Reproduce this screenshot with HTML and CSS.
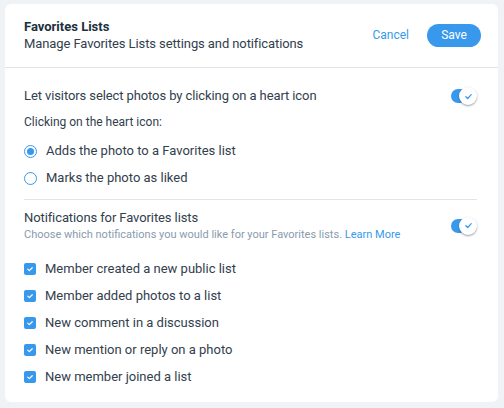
FILE: index.html
```html
<!DOCTYPE html>
<html lang="en">
<head>
    <meta charset="UTF-8">
    <meta name="viewport" content="width=device-width, initial-scale=1.0">
    <title>Favorites Lists</title>
    <link rel="stylesheet" href="styles.css">
</head>
<body>
    <div class="card">
        <div class="header">
            <div>
                <h1>Favorites Lists</h1>
                <p class="subtitle">Manage Favorites Lists settings and notifications</p>
            </div>
            <div class="actions">
                <button class="link-btn">Cancel</button>
                <button class="save-btn">Save</button>
            </div>
        </div>

        <div class="content">
            <div class="row first">
                <span class="row-title">Let visitors select photos by clicking on a heart icon</span>
                <span class="toggle"><span class="knob"><svg viewBox="0 0 10 10" width="9" height="9"><path d="M2 5.2 L4.2 7.2 L8 3" fill="none" stroke="#3899ec" stroke-width="1.4" stroke-linecap="round" stroke-linejoin="round"/></svg></span></span>
            </div>
            <p class="label">Clicking on the heart icon:</p>
            <div class="options">
                <label class="option"><span class="radio checked"></span>Adds the photo to a Favorites list</label>
                <label class="option"><span class="radio"></span>Marks the photo as liked</label>
            </div>

            <hr class="divider">

            <div class="row">
                <div>
                    <div class="row-title">Notifications for Favorites lists</div>
                    <div class="hint">Choose which notifications you would like for your Favorites lists. <a href="#">Learn More</a></div>
                </div>
                <span class="toggle"><span class="knob"><svg viewBox="0 0 10 10" width="9" height="9"><path d="M2 5.2 L4.2 7.2 L8 3" fill="none" stroke="#3899ec" stroke-width="1.4" stroke-linecap="round" stroke-linejoin="round"/></svg></span></span>
            </div>

            <div class="checks">
                <label class="option"><span class="checkbox"><svg viewBox="0 0 10 10" width="8" height="8"><path d="M2.2 5.2 L4.2 7 L7.8 3.4" fill="none" stroke="#fff" stroke-width="1.5" stroke-linecap="round" stroke-linejoin="round"/></svg></span>Member created a new public list</label>
                <label class="option"><span class="checkbox"><svg viewBox="0 0 10 10" width="8" height="8"><path d="M2.2 5.2 L4.2 7 L7.8 3.4" fill="none" stroke="#fff" stroke-width="1.5" stroke-linecap="round" stroke-linejoin="round"/></svg></span>Member added photos to a list</label>
                <label class="option"><span class="checkbox"><svg viewBox="0 0 10 10" width="8" height="8"><path d="M2.2 5.2 L4.2 7 L7.8 3.4" fill="none" stroke="#fff" stroke-width="1.5" stroke-linecap="round" stroke-linejoin="round"/></svg></span>New comment in a discussion</label>
                <label class="option"><span class="checkbox"><svg viewBox="0 0 10 10" width="8" height="8"><path d="M2.2 5.2 L4.2 7 L7.8 3.4" fill="none" stroke="#fff" stroke-width="1.5" stroke-linecap="round" stroke-linejoin="round"/></svg></span>New mention or reply on a photo</label>
                <label class="option"><span class="checkbox"><svg viewBox="0 0 10 10" width="8" height="8"><path d="M2.2 5.2 L4.2 7 L7.8 3.4" fill="none" stroke="#fff" stroke-width="1.5" stroke-linecap="round" stroke-linejoin="round"/></svg></span>New member joined a list</label>
            </div>
        </div>
    </div>
</body>
</html>
```

FILE: styles.css
```css
body {
    margin: 0;
    padding: 4px 6px 6px 5px;
    background-color: #eff3f6;
    font-family: Roboto, Arial, sans-serif;
    color: #32404d;
}

.card {
    background: #ffffff;
    border-radius: 6px;
    height: 398px;
    box-sizing: border-box;
}

.header {
    display: flex;
    justify-content: space-between;
    align-items: center;
    padding: 14px 17px 15px 19px;
    border-bottom: 1px solid #dfe5eb;
}

h1 {
    margin: 0;
    font-size: 13px;
    font-weight: bold;
    color: #20303c;
    line-height: 17px;
}

.subtitle {
    margin: 0;
    font-size: 13px;
    line-height: 17px;
    color: #32404d;
    letter-spacing: -0.1px;
}

.actions {
    display: flex;
    align-items: center;
    gap: 18px;
}

.link-btn {
    background: none;
    border: none;
    padding: 0;
    font-family: inherit;
    font-size: 12px;
    color: #3899ec;
    cursor: pointer;
}

.save-btn {
    background: #3899ec;
    color: #ffffff;
    border: none;
    border-radius: 12px;
    height: 23px;
    width: 54px;
    font-family: inherit;
    font-size: 12px;
    cursor: pointer;
}

.content {
    padding: 19px 21px 0 19px;
}

.row {
    display: flex;
    justify-content: space-between;
    align-items: center;
}

.row-title {
    font-size: 13px;
    line-height: 18px;
    color: #32404d;
    letter-spacing: -0.1px;
}

.toggle {
    position: relative;
    width: 22px;
    height: 14px;
    margin-right: 4px;
    border-radius: 7px;
    background: #3899ec;
    flex-shrink: 0;
}

.knob {
    position: absolute;
    right: -4px;
    top: -2px;
    width: 18px;
    height: 18px;
    border-radius: 50%;
    background: #ffffff;
    box-shadow: 0 1px 2px rgba(22, 45, 61, 0.45);
    display: flex;
    align-items: center;
    justify-content: center;
}

.label {
    margin: 9px 0 0;
    font-size: 12px;
    line-height: 16px;
    color: #32404d;
}

.options {
    display: flex;
    flex-direction: column;
    gap: 9px;
    margin-top: 12px;
}

.option {
    display: flex;
    align-items: center;
    gap: 9px;
    font-size: 13px;
    line-height: 18px;
    color: #32404d;
}

.radio {
    width: 11px;
    height: 11px;
    border: 1px solid #3899ec;
    border-radius: 50%;
    box-sizing: content-box;
    position: relative;
}

.radio.checked::after {
    content: "";
    position: absolute;
    left: 2px;
    top: 2px;
    width: 7px;
    height: 7px;
    border-radius: 50%;
    background: #3899ec;
}

.divider {
    border: none;
    border-top: 1px solid #dfe5eb;
    margin: 12px 0 0;
}

.divider + .row {
    margin-top: 9px;
}

.hint {
    font-size: 11px;
    line-height: 15px;
    color: #8a9bae;
}

.hint a {
    color: #3899ec;
    text-decoration: none;
}

.checks {
    display: flex;
    flex-direction: column;
    gap: 9px;
    margin-top: 18px;
}

.checkbox {
    width: 12px;
    height: 12px;
    border-radius: 2px;
    background: #3899ec;
    display: flex;
    align-items: center;
    justify-content: center;
}
```
